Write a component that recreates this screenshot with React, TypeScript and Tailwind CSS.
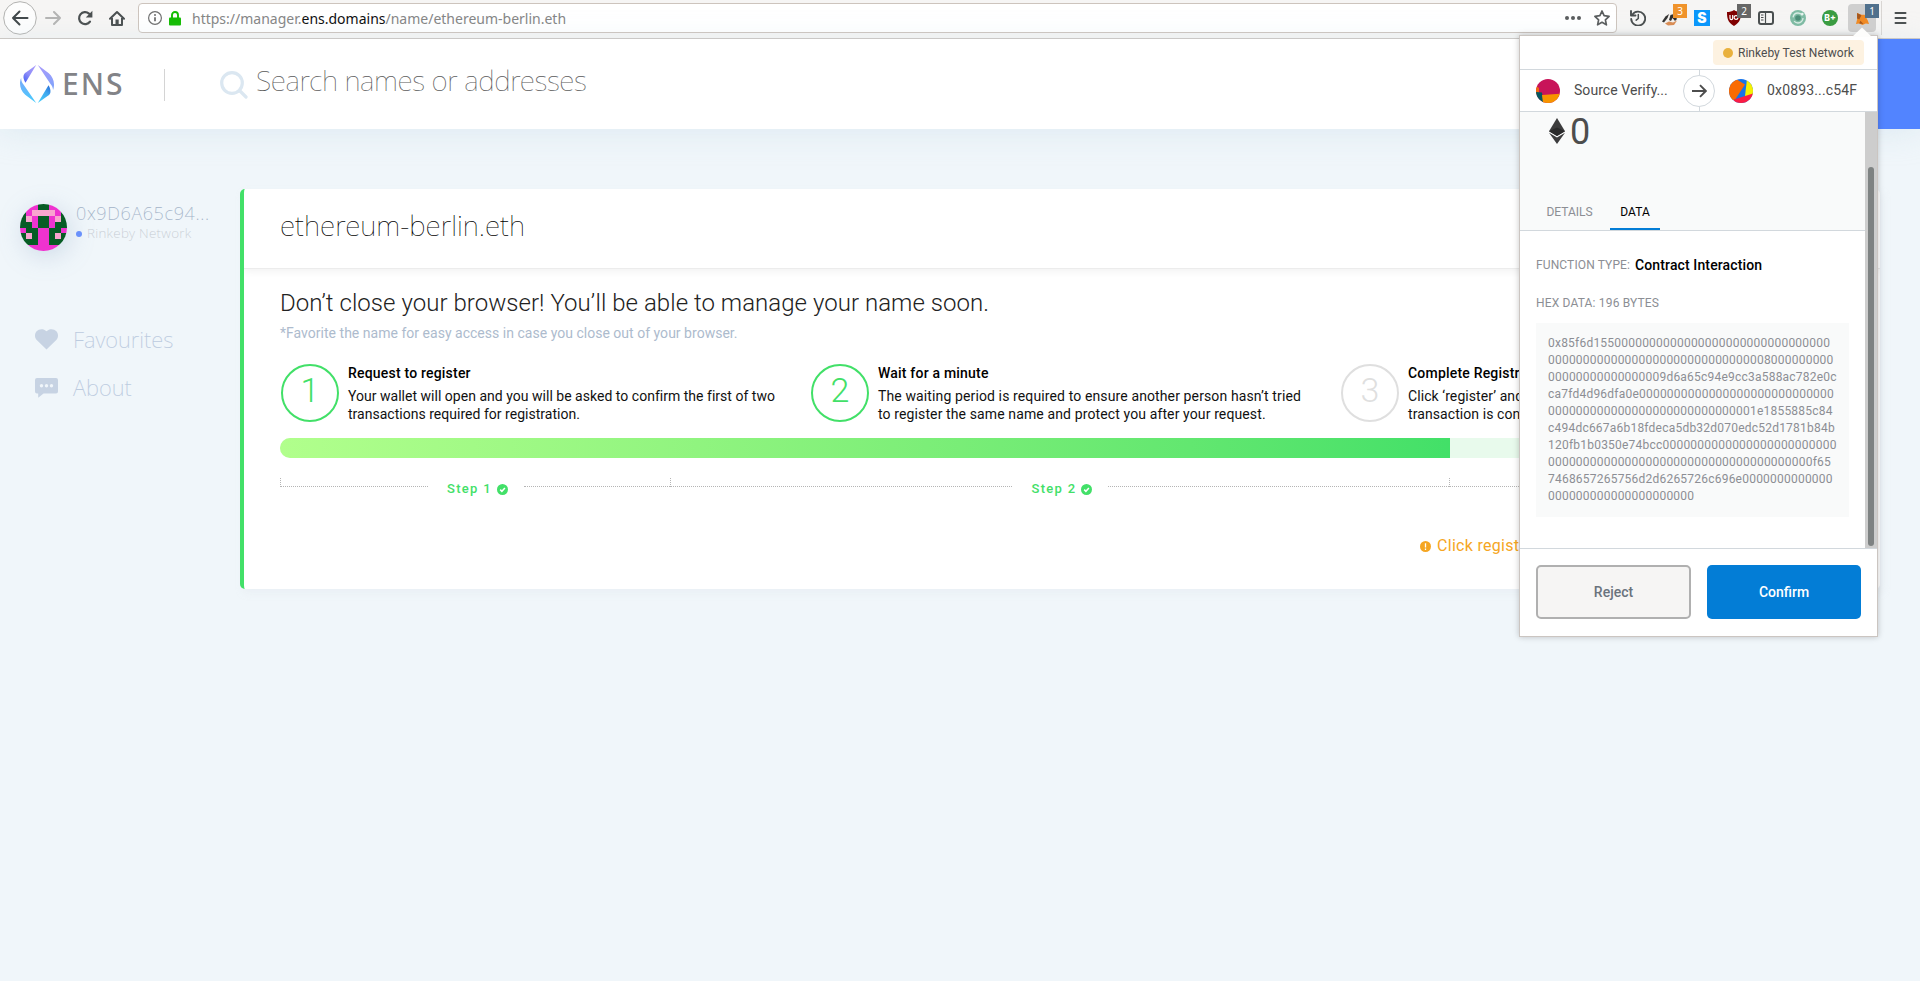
import React from "react";

type Tone = "done" | "idle";

const HEX_LINES = [
  "0x85f6d155" + "0".repeat(31),
  "0".repeat(31) + "8000000000",
  "0".repeat(16) + "9d6a65c94e9cc3a588ac782e0c",
  "ca7fd4d96dfa0e" + "0".repeat(28),
  "0".repeat(29) + "1e1855885c84",
  "c494dc667a6b18fdeca5db32d070edc52d1781b84b",
  "120fb1b0350e74bcc" + "0".repeat(25),
  "0".repeat(38) + "f65",
  "7468657265756d2d6265726c696e" + "0".repeat(13),
  "0".repeat(21),
];

/* ---------- browser chrome ---------- */

function BrowserBar() {
  return (
    <div className="flex h-[39px] shrink-0 items-start border-b border-[#cdc7c2] bg-[#f6f5f4] text-[#4a4f50]">
      <div className="flex h-9 w-[138px] items-center">
        <svg className="ml-[3px] h-[34px] w-[34px] shrink-0" viewBox="0 0 34 34" fill="none">
          <circle cx="17" cy="17" r="16.3" fill="#fdfdfd" stroke="#b2b2b0" strokeWidth="1" />
          <path d="M24.500 17H10M16.500 10.500L10 17l6.500 6.500" stroke="#41484a" strokeWidth="2" strokeLinecap="round" strokeLinejoin="round" />
        </svg>
        <svg className="ml-2 h-4 w-4 shrink-0" viewBox="0 0 16 16" fill="none" stroke="#b4b4b3" strokeWidth="2" strokeLinecap="round" strokeLinejoin="round">
          <path d="M1 8h14M9 2l6 6-6 6" />
        </svg>
        <svg className="ml-4 h-4 w-4 shrink-0" viewBox="0 0 16 16" fill="none">
          <path d="M13 11.600A6 6 0 1 1 12 3.600" stroke="#4a4f50" strokeWidth="2.200" strokeLinecap="round" />
          <path d="M15.400 .800v6.600H8.800z" fill="#4a4f50" />
        </svg>
        <svg className="ml-4 h-[17px] w-4 shrink-0" viewBox="0 0 16 17" fill="none">
          <path d="M1 8.800L8 2l7 6.800" stroke="#4a4f50" strokeWidth="2" strokeLinecap="round" strokeLinejoin="round" />
          <path d="M3 8v7h10V8" stroke="#4a4f50" strokeWidth="2" strokeLinejoin="round" />
          <path d="M6.500 9.500h3.200V15H6.500z" fill="#4a4f50" />
        </svg>
      </div>
      <div className="mt-[3px] flex h-[30px] w-[1479px] items-center rounded-[4px] border border-[#cdc4bd] bg-white">
        <svg className="ml-[9px] h-[14px] w-[14px]" viewBox="0 0 14 14" fill="none">
          <circle cx="7" cy="7" r="6.400" stroke="#6f6f6f" strokeWidth="1.200" />
          <path d="M7 6.200v4" stroke="#6f6f6f" strokeWidth="1.800" />
          <circle cx="7" cy="4" r="1" fill="#6f6f6f" />
        </svg>
        <svg className="ml-[7px] h-[15px] w-3" viewBox="0 0 12 15" fill="none">
          <path d="M3 7V4a3 3 0 0 1 6 0v3" stroke="#12bc00" strokeWidth="1.900" />
          <rect y="6.500" width="12" height="8" rx="1" fill="#12bc00" />
        </svg>
        <div className="ml-[11px] mt-px whitespace-nowrap font-['Noto_Sans',sans-serif] text-[14px] leading-[20px] text-[#858585]">
          https://manager.<span className="text-[#0c0c0d]">ens.domains</span>/name/ethereum-berlin.eth
        </div>
        <svg className="ml-auto h-4 w-[18px]" viewBox="0 0 18 16" fill="#5a5d5e">
          <circle cx="3" cy="8" r="2" />
          <circle cx="9" cy="8" r="2" />
          <circle cx="15" cy="8" r="2" />
        </svg>
        <svg className="ml-[11px] mr-[5px] h-[18px] w-[18px]" viewBox="0 0 18 18" fill="none">
          <path d="M9 2l2.100 4.700 5 .600-3.700 3.500 1 5L9 13.300l-4.400 2.500 1-5L1.900 7.300l5-.600z" stroke="#5a5d5e" strokeWidth="1.700" strokeLinejoin="round" />
        </svg>
      </div>
      <div className="ml-[5px] flex h-9 items-center">
        <Ext>
          <svg className="h-4 w-4" viewBox="0 0 16 16" fill="none" stroke="#4a4f50" strokeWidth="1.900" strokeLinecap="round" strokeLinejoin="round">
            <path d="M2.200 5A7 7 0 1 1 1.200 9" />
            <path d="M1 1v4.500h4.500" />
            <path d="M8.300 4.500v4L6.200 10.200" strokeWidth="1.500" />
          </svg>
        </Ext>
        <Ext badge="3" badgeClass="bg-[#f0932b]">
          <svg className="h-4 w-4" viewBox="0 0 16 16">
            <path d="M0 11L3 6l5-3 6 1 2 6-3 4-7 1-4-2z" fill="#f2efec" />
            <path d="M0 11.500L3.500 6.500 7 4 5.500 8 2 12.500z" fill="#333" />
            <path d="M7 10l1.500-5L12 4l3 5-2 2-2.500-3L9 11z" fill="#2f2f2f" />
            <path d="M3 13.500l4-2 4 1 4-2-3 4.500-6 .500z" fill="#d98d55" />
          </svg>
        </Ext>
        <Ext>
          <span className="flex h-4 w-4 items-center justify-center bg-[#0a97fb] font-['Inter',sans-serif] text-[14px] font-black leading-4 text-white">S</span>
        </Ext>
        <Ext badge="2" badgeClass="bg-[#666666]">
          <svg className="h-4 w-4" viewBox="0 0 16 16">
            <path d="M8 0c2 1.500 4.500 2 7 2 0 6-.500 10-7 14C1.500 12 1 8 1 2c2.500 0 5-.500 7-2z" fill="#800000" />
            <path d="M4 5v3.200a1.300 1.300 0 0 0 2.700 0V5" fill="none" stroke="#fff" strokeWidth="1.200" />
            <circle cx="10" cy="7.500" r="1.900" fill="none" stroke="#fff" strokeWidth="1.200" />
          </svg>
        </Ext>
        <Ext>
          <svg className="h-[14px] w-4" viewBox="0 0 16 14" fill="none" stroke="#4a4f50">
            <rect x="1" y="1" width="14" height="12" rx="2" strokeWidth="2" />
            <path d="M7.500 1v12" strokeWidth="1.200" />
            <path d="M3 4h2.500M3 6.500h2.500M3 9h2.500" strokeWidth="1" />
          </svg>
        </Ext>
        <Ext>
          <svg className="h-4 w-4" viewBox="0 0 16 16" fill="none">
            <circle cx="8" cy="8" r="8" fill="#7fbba4" />
            <circle cx="8" cy="8" r="5" stroke="#d7ebe3" strokeWidth="1.300" strokeDasharray="12 4" />
            <circle cx="8" cy="8" r="2.800" fill="#4d8f79" />
            <circle cx="12.300" cy="4" r="1.300" fill="#e8f4ef" />
          </svg>
        </Ext>
        <Ext>
          <span className="flex h-4 w-4 items-center justify-center rounded-full bg-[#3a9c42] font-['Inter',sans-serif] text-[8.500px] font-extrabold leading-4 text-white">B+</span>
        </Ext>
        <Ext badge="1" badgeClass="bg-[#50708c]" active>
          <svg className="mt-[1px] h-[13px] w-[13px]" viewBox="0 0 12 12">
            <path d="M1 1l4 1.500h3L11 8l1 3-3-.500L6 12l-3-1.500L0 11l1-4z" fill="#f08a24" />
            <path d="M1 1l4 2-2 4-2-1zM4 8l3 3-4-.500z" fill="#a5571d" />
          </svg>
        </Ext>
      </div>
      <div className="ml-[3px] mt-px h-[34px] w-px bg-[#d9d6d3]" />
      <svg className="ml-3 mt-3 h-3 w-[13px]" viewBox="0 0 13 12" fill="none" stroke="#4a4f50" strokeWidth="2" strokeLinecap="round">
        <path d="M1.500 1h10M1.500 6h10M1.500 11h10" />
      </svg>
    </div>
  );
}

function Ext({ children, badge, badgeClass = "", active }: { children: React.ReactNode; badge?: string; badgeClass?: string; active?: boolean }) {
  return (
    <div className="relative flex h-9 w-8 items-center justify-center">
      <div className={active ? "flex h-7 w-7 items-center justify-center rounded-[4px] bg-[#cfcfcf]" : "flex items-center justify-center"}>{children}</div>
      {badge && (
        <span className={`absolute -right-px top-1 flex h-[14px] w-[14px] items-center justify-center font-['Noto_Sans',sans-serif] text-[10px] leading-[14px] text-white ${badgeClass}`}>
          {badge}
        </span>
      )}
    </div>
  );
}

/* ---------- ENS app ---------- */

function EnsLogo() {
  return (
    <svg className="h-[38px] w-[34px]" viewBox="0 0 34 38">
      <defs>
        <linearGradient id="lt" x1="0" y1="1" x2="0.700" y2="0">
          <stop offset="0" stopColor="#3f5cf3" />
          <stop offset="0.500" stopColor="#8d8cf8" />
          <stop offset="1" stopColor="#a79bfb" />
        </linearGradient>
        <linearGradient id="rb" x1="0.200" y1="1" x2="0.900" y2="0">
          <stop offset="0" stopColor="#4acdfb" />
          <stop offset="0.600" stopColor="#3fa8ee" />
          <stop offset="1" stopColor="#2a6fd8" />
        </linearGradient>
        <linearGradient id="lb" x1="0" y1="0" x2="0" y2="1">
          <stop offset="0" stopColor="#7ea6fb" />
          <stop offset="1" stopColor="#44ccfc" />
        </linearGradient>
        <linearGradient id="rt" x1="0" y1="0" x2="0" y2="1">
          <stop offset="0" stopColor="#a99afb" />
          <stop offset="1" stopColor="#7ba4fb" />
        </linearGradient>
      </defs>
      <path d="M16.200 0L5.500 17.800C4 15.500 3 12.500 3.600 10.500 4 8.800 5 7.900 6.200 7.200z" fill="url(#lt)" />
      <path d="M17.800 0l11 8.300c3.700 3.300 5.700 8 5.100 13-.100 1.600-.400 2.700-.900 3.700 0-2-.700-4-2.500-6z" fill="url(#rt)" />
      <path d="M1.300 12.500c-.400 2.500.500 4.700 2.200 7L16.200 38 5.200 29.800C1.200 26.200-.400 21.500.100 16.800c.200-1.700.600-3 1.200-4.300z" fill="url(#lb)" />
      <path d="M17.800 38l10.700-17.800c1.500 2.300 2.300 5 1.900 7.300-.300 1.600-1.300 2.500-2.500 3.300z" fill="url(#rb)" />
    </svg>
  );
}

function Header() {
  return (
    <header className="flex h-[90px] shrink-0 bg-white shadow-[0_4px_30px_rgba(190,215,230,0.35)]">
      <div className="flex flex-1 items-start">
        <div className="ml-5 mt-[26px] flex h-[38px] w-[144px] items-center">
          <EnsLogo />
          <span className="ml-2 font-['Noto_Sans',sans-serif] text-[30px] font-medium leading-[38px] tracking-[2px] text-[#828387]">ENS</span>
        </div>
        <div className="mt-[30px] h-8 w-px bg-[#d4d4d4]" />
        <svg className="ml-[55px] mt-8 h-7 w-7" viewBox="0 0 28 28" fill="none" stroke="#dbe7f1" strokeWidth="3.200" strokeLinecap="round">
          <circle cx="12" cy="12" r="10.300" />
          <path d="M20 20l6 6" />
        </svg>
        <div className="ml-2 mt-[22px] whitespace-nowrap font-['Noto_Sans',sans-serif] text-[28px] font-thin leading-[38px] tracking-[-0.380px] text-[#5c5c5c]">
          Search names or addresses
        </div>
      </div>
      <div className="w-[162px] bg-[#5284ff]" />
    </header>
  );
}

const M = "#ee33cf";
const G = "#075c25";
const P = "#f9a5cf";
const AVATAR = [
  [M, M, M, G, G, M, M, M],
  [G, M, P, P, P, P, M, G],
  [G, P, M, G, G, M, P, G],
  [G, G, M, G, G, M, G, G],
  [M, G, G, M, M, G, G, M],
  [G, P, G, M, M, G, P, G],
  [G, G, G, M, M, G, G, G],
  [M, M, M, M, M, M, M, M],
];

function Sidebar() {
  return (
    <aside className="flex w-60 shrink-0 flex-col pt-[75px]">
      <div className="flex h-[47px] pl-5">
        <div className="h-[47px] w-[47px] overflow-hidden rounded-full shadow-[3px_5px_24px_rgba(143,168,200,0.35)]">
          <svg className="h-full w-full" viewBox="0 0 8 8" shapeRendering="crispEdges">
            {AVATAR.map((row, y) => row.map((c, x) => <rect key={`${x}-${y}`} x={x} y={y} width="1" height="1" fill={c} />))}
          </svg>
        </div>
        <div className="ml-[9px] flex flex-col">
          <div className="-mt-[3px] h-6 whitespace-nowrap font-['Noto_Sans',sans-serif] text-[18px] font-extralight leading-6 tracking-[0.650px] text-[#a3b3c8]">0x9D6A65c94...</div>
          <div className="flex h-4 items-center">
            <span className="mt-px h-1.5 w-1.5 rounded-full bg-[#6a91fb]" />
            <span className="ml-[5px] whitespace-nowrap font-['Noto_Sans',sans-serif] text-[13.500px] font-extralight leading-4 tracking-[0.300px] text-[#c5cbd2]">Rinkeby Network</span>
          </div>
        </div>
      </div>
      <nav className="mt-[72px] flex flex-col font-['Noto_Sans',sans-serif] text-[22px] font-extralight leading-8 text-[#bccbdf]">
        <div className="flex h-8 items-center">
          <svg className="ml-[35px] h-[21px] w-[23px]" viewBox="0 0 23 21" fill="#c7d3e3">
            <path d="M11.500 20.500L1.700 11C-.500 8.700-.600 4.800 1.600 2.300 4-.400 8.500-.700 11.500 2.200c3-2.900 7.500-2.600 9.900.100 2.200 2.500 2.100 6.400-.100 8.700z" />
          </svg>
          <span className="ml-[15px]">Favourites</span>
        </div>
        <div className="mt-4 flex h-8 items-center">
          <svg className="ml-[35px] mt-px h-5 w-[23px]" viewBox="0 0 23 20">
            <path d="M2 0h19a2 2 0 0 1 2 2v11.500a2 2 0 0 1-2 2H8.500L3.200 19.800v-4.300H2a2 2 0 0 1-2-2V2a2 2 0 0 1 2-2z" fill="#c7d3e3" />
            <circle cx="6.500" cy="7.700" r="1.700" fill="#f0f6fa" />
            <circle cx="11.500" cy="7.700" r="1.700" fill="#f0f6fa" />
            <circle cx="16.500" cy="7.700" r="1.700" fill="#f0f6fa" />
          </svg>
          <span className="ml-[15px]">About</span>
        </div>
      </nav>
    </aside>
  );
}

function Step({ n, title, lines, tone, bodyClass }: { n: string; title: string; lines: string[]; tone: Tone; bodyClass: string }) {
  return (
    <div className="flex w-[530px] shrink-0">
      <div
        className={`flex h-[58px] w-[58px] shrink-0 justify-center rounded-full border-2 text-[34px] font-light leading-[49px] ${
          tone === "done" ? "border-[#42e068] text-[#42e068]" : "border-[#dfdfdf] text-[#dfdfdf]"
        }`}
      >
        {n}
      </div>
      <div className="ml-[9px] flex flex-col whitespace-nowrap text-[14px] text-[#111]">
        <div className="h-[18px] font-medium leading-[18px] tracking-[0.200px] text-black">{title}</div>
        <div className={`mt-[5px] leading-[18px] ${bodyClass}`}>
          {lines.map((l) => (
            <div key={l}>{l}</div>
          ))}
        </div>
      </div>
    </div>
  );
}

function Segment({ className, label }: { className: string; label?: string }) {
  return (
    <div className={`flex h-6 shrink-0 items-start ${className}`}>
      <div className="h-[9px] flex-1 border-b border-l border-dotted border-[#b5b5b5]" />
      {label && (
        <div className="mt-[2px] flex w-24 items-center justify-center pl-1 text-[13px] font-medium leading-[18px] tracking-[1.300px] text-[#42e068]">
          {label}
          <svg className="ml-[5px] h-[11px] w-[11px]" viewBox="0 0 11 11">
            <circle cx="5.500" cy="5.500" r="5.500" fill="#42e068" />
            <path d="M3.200 5.600l1.700 1.700 3-3.200" stroke="#fff" strokeWidth="1.500" fill="none" />
          </svg>
        </div>
      )}
      <div className="h-[9px] flex-1 border-b border-dotted border-[#b5b5b5]" />
    </div>
  );
}

function Card() {
  return (
    <section className="mt-[60px] flex h-[400px] w-[1640px] flex-col overflow-hidden rounded-[5px] border-l-4 border-[#42e068] bg-white font-['Roboto',sans-serif] shadow-[3px_4px_6px_rgba(229,236,241,0.5)]">
      <div className="h-[80px] shrink-0 border-b border-[#ececec] pl-9 pt-[17px] shadow-[0_2px_8px_rgba(0,0,0,0.06)]">
        <h1 className="whitespace-nowrap font-['Noto_Sans',sans-serif] text-[28px] font-thin leading-[38px] text-black">ethereum-berlin.eth</h1>
      </div>
      <div className="flex flex-col pl-9">
        <h2 className="mt-4 h-9 whitespace-nowrap text-[24px] font-light leading-9 tracking-[0.040px] text-[#222]">
          Don’t close your browser! You’ll be able to manage your name soon.
        </h2>
        <p className="mt-[2px] h-5 whitespace-nowrap text-[14px] leading-5 tracking-[0.020px] text-[#adbbcd]">
          *Favorite the name for easy access in case you close out of your browser.
        </p>
        <div className="mt-[21px] flex h-[58px] pl-px">
          <Step n="1" tone="done" bodyClass="tracking-[0.020px]" title="Request to register" lines={["Your wallet will open and you will be asked to confirm the first of two", "transactions required for registration."]} />
          <Step n="2" tone="done" bodyClass="tracking-[0.120px]" title="Wait for a minute" lines={["The waiting period is required to ensure another person hasn’t tried", "to register the same name and protect you after your request."]} />
          <Step n="3" tone="idle" bodyClass="tracking-[0.080px]" title="Complete Registration" lines={["Click ‘register’ and", "transaction is con"]} />
        </div>
        <div className="mt-4 h-5 w-[1560px] overflow-hidden rounded-full bg-[#e8faec]">
          <div className="h-full w-[1170px] bg-linear-to-r from-[#b1ff8c] to-[#42e068]" />
        </div>
        <div className="mt-5 flex w-[1560px]">
          <Segment className="w-[390px]" label="Step 1" />
          <Segment className="w-[779px]" label="Step 2" />
          <Segment className="w-[391px]" />
        </div>
        <div className="mt-8 flex h-6 items-center pl-[1140px] text-[16px] leading-6 text-[#f5a623]">
          <svg className="h-[11px] w-[11px] shrink-0" viewBox="0 0 11 11">
            <circle cx="5.500" cy="5.500" r="5.500" fill="#f5a623" />
            <path d="M5.500 2.300v4.200M5.500 7.600v1.300" stroke="#fff" strokeWidth="1.300" />
          </svg>
          <span className="ml-1.5 whitespace-nowrap tracking-[0.300px]">Click register</span>
        </div>
      </div>
    </section>
  );
}

/* ---------- wallet popup ---------- */

function WalletPopup() {
  return (
    <div className="absolute left-[1519px] top-[35px] flex h-[602px] w-[359px] flex-col border border-[#cbc5c1] bg-white font-['Roboto',sans-serif] shadow-[0_0_6px_rgba(0,0,0,0.22)]">
      <svg className="absolute left-[332px] top-[-9px] h-[10px] w-5" viewBox="0 0 20 10">
        <path d="M0 10L10 .500 20 10z" fill="#fdfdfc" />
      </svg>
      <div className="flex h-[34px] shrink-0 items-start justify-end border-b border-[#d2d8dd]">
        <div className="mr-[13px] mt-1 flex h-[25px] w-[151px] items-center rounded-[4px] bg-[#fdf2e1] text-[12px] text-[#4d4d4d]">
          <span className="ml-2.5 h-2.5 w-2.5 rounded-full bg-[#e9b13e]" />
          <span className="ml-[5px] whitespace-nowrap leading-4 tracking-[0.030px]">Rinkeby Test Network</span>
        </div>
      </div>
      <div className="flex h-[42px] shrink-0 items-center border-b border-[#d2d8dd] text-[14px] text-[#4d4d4d]">
        <svg className="ml-4 h-6 w-6 shrink-0" viewBox="0 0 24 24">
          <defs><clipPath id="c1"><circle cx="12" cy="12" r="12" /></clipPath></defs>
          <g clipPath="url(#c1)">
            <rect width="24" height="24" fill="#c81459" />
            <path d="M0 7l3 2v6H0z" fill="#f0680e" />
            <path d="M0 13l6 .500 1.500 10.500H0z" fill="#03585e" />
            <path d="M6 16l18-1.200V24H7z" fill="#f79400" />
          </g>
        </svg>
        <span className="ml-[14px] w-[94px] whitespace-nowrap tracking-[0.060px]">Source Verify...</span>
        <div className="ml-[15px] flex h-[42px] w-8 shrink-0 flex-col items-center">
          <span className="h-[5px] w-px bg-[#d2d8dd]" />
          <span className="flex h-8 w-8 items-center justify-center rounded-full border border-[#d2d8dd]">
            <svg className="h-[14px] w-[15px]" viewBox="0 0 15 14" fill="none" stroke="#4d4d4d" strokeWidth="1.900">
              <path d="M0 7h13.500M8 1.200L13.800 7 8 12.800" />
            </svg>
          </span>
          <span className="h-1 w-px bg-[#d2d8dd]" />
        </div>
        <svg className="ml-[14px] h-6 w-6 shrink-0" viewBox="0 0 24 24">
          <defs><clipPath id="c2"><circle cx="12" cy="12" r="12" /></clipPath></defs>
          <g clipPath="url(#c2)">
            <rect width="24" height="24" fill="#1773e8" />
            <path d="M0 0h7L16 5.500 6.500 20 0 24z" fill="#fa6b02" />
            <path d="M18 0l6 2v16l-8-1z" fill="#f5f003" />
            <path d="M5 20.500L24 14.500V24H5z" fill="#fb1c44" />
          </g>
        </svg>
        <span className="ml-[14px] whitespace-nowrap tracking-[0.160px]">0x0893...c54F</span>
      </div>
      <div className="flex min-h-0 flex-1">
        <div className="flex flex-1 flex-col">
          <div className="flex h-[119px] shrink-0 flex-col border-b border-[#d2d8dd] bg-[#f9fafa]">
            <div className="flex h-[38px] items-start pl-[29px]">
              <svg className="mt-1.5 h-[26px] w-4" viewBox="0 0 16 26">
                <path d="M8 0l8 13.200L8 18 0 13.200z" fill="#3c3c3d" />
                <path d="M0 14.800L8 19.600l8-4.800L8 26z" fill="#3c3c3d" />
                <path d="M0 13.200L8 9.600l8 3.600L8 18z" fill="#2a2a2b" />
              </svg>
              <span className="ml-[5px] text-[36px] leading-[41px] text-[#4d4d4d]">0</span>
            </div>
            <div className="mt-auto flex text-[12px] text-[#8c8e94]">
              <div className="ml-[17px] flex h-[27px] w-[65px] items-start justify-center leading-[18px]">DETAILS</div>
              <div className="ml-2 flex h-[27px] w-[50px] items-start justify-center border-b-2 border-[#037dd6] leading-[18px] tracking-[0.100px] text-black">DATA</div>
            </div>
          </div>
          <div className="flex flex-col px-4 text-[12px] text-[#8c8e94]">
            <div className="mt-6 flex h-5 items-center whitespace-nowrap leading-5">
              <span className="tracking-[0.120px]">FUNCTION TYPE:</span>
              <span className="ml-[5px] text-[14px] font-medium tracking-[0.120px] text-black">Contract Interaction</span>
            </div>
            <div className="mt-[19px] h-[18px] whitespace-nowrap leading-[18px] tracking-[0.170px]">HEX DATA: 196 BYTES</div>
            <div className="mt-[11px] h-[194px] w-[313px] bg-[#f9fafa] pl-3 pt-3 leading-[17px] tracking-[0.220px]">
              {HEX_LINES.map((l, i) => (
                <div key={i} className="whitespace-nowrap">{l}</div>
              ))}
            </div>
          </div>
        </div>
        <div className="flex w-3 shrink-0 flex-col items-center bg-[#cdcdcd]">
          <div className="mt-[55px] h-[379px] w-1.5 rounded-full bg-[#7e8282]" />
        </div>
      </div>
      <div className="flex h-[88px] shrink-0 gap-4 border-t border-[#d2d8dd] pl-4 pt-4 text-[14px] font-medium">
        <button className="h-[54px] w-[155px] rounded-[5px] border-2 border-[#b0b0b0] bg-[#f6f5f4] text-[#6a737d]">Reject</button>
        <button className="h-[54px] w-[154px] rounded-[5px] bg-[#037dd6] text-white">Confirm</button>
      </div>
    </div>
  );
}

export default function App() {
  return (
    <div className="relative flex h-[981px] w-full flex-col overflow-hidden bg-[#f0f6fa]">
      <BrowserBar />
      <Header />
      <main className="flex">
        <Sidebar />
        <Card />
      </main>
      <WalletPopup />
    </div>
  );
}
